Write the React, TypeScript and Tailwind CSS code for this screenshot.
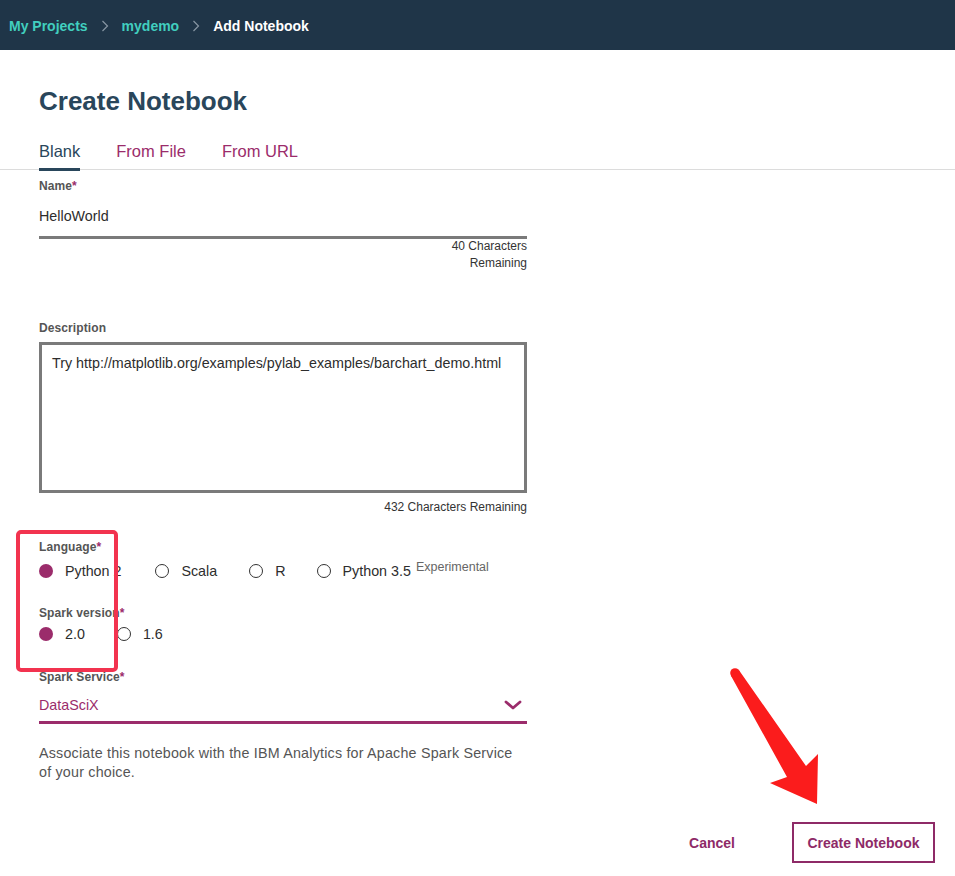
import React from "react";

const FONT = { fontFamily: '"Liberation Sans", Arial, Helvetica, sans-serif' };

function Crumb() {
  return (
    <svg width="8" height="12" viewBox="0 0 8 12" className="mx-[13px]">
      <path d="M1.5 1 L6.5 6 L1.5 11" fill="none" stroke="#8796a3" strokeWidth="1.2" />
    </svg>
  );
}

function Radio({ checked, label, extra }: { checked?: boolean; label: string; extra?: React.ReactNode }) {
  return (
    <div className="flex items-center">
      {checked ? (
        <span className="block w-[14px] h-[14px] rounded-full bg-[#9b2c6b]" />
      ) : (
        <span className="block w-[14px] h-[14px] rounded-full border-[1.5px] border-[#333]" />
      )}
      <span className="ml-[12px] text-[14.3px] leading-[20px] text-[#2d2d2d]">{label}</span>
      {extra}
    </div>
  );
}

function Label({ text, req }: { text: string; req?: boolean }) {
  return (
    <div className="text-[12px] leading-[16px] font-bold text-[#555] tracking-[0.1px]">
      {text}
      {req && <span className="text-[#9b2c6b]">*</span>}
    </div>
  );
}

export default function App() {
  return (
    <div className="relative w-[955px] min-h-[876px] bg-white" style={FONT}>
      {/* header */}
      <div className="h-[50px] bg-[#1f3548] flex items-center pl-[9px] pt-[2px] text-[14px] font-bold">
        <span className="text-[#41cfbf]">My Projects</span>
        <Crumb />
        <span className="text-[#41cfbf]">mydemo</span>
        <Crumb />
        <span className="text-white">Add Notebook</span>
      </div>

      <div className="px-[39px] mt-[36px] text-[26px] leading-[30px] font-bold text-[#29465b]">Create Notebook</div>

      {/* tabs */}
      <div className="mt-[25px] px-[39px] flex gap-[36px] border-b border-[#dcdcdc] h-[29px]">
        <div className="text-[16.5px] leading-[20px] text-[#29465b] pb-[6px] border-b-[3px] border-[#29465b] h-[30px]">Blank</div>
        <div className="text-[16.5px] leading-[20px] text-[#9b2c6b]">From File</div>
        <div className="text-[16.5px] leading-[20px] text-[#9b2c6b]">From URL</div>
      </div>

      <div className="px-[39px]">
        <div className="w-[488px]">
          <div className="mt-[8px]">
            <Label text="Name" req />
          </div>
          <div className="mt-[12px] pb-[10px] border-b-[3px] border-[#7a7a7a] text-[14.3px] leading-[20px] text-[#2d2d2d]">
            HelloWorld
          </div>
          <div className="-mt-[1px] text-right text-[12px] leading-[17px] text-[#333]">
            40 Characters
            <br />
            Remaining
          </div>

          <div className="mt-[48px]">
            <Label text="Description" />
          </div>
          <div className="mt-[6px] h-[151px] border-[3px] border-[#7a7a7a] pt-[8px] pl-[10px] text-[14.3px] leading-[20px] text-[#2d2d2d]">
            Try http://matplotlib.org/examples/pylab_examples/barchart_demo.html
          </div>
          <div className="mt-[6px] text-right text-[12px] leading-[16px] text-[#333]">432 Characters Remaining</div>

          <div className="mt-[24px]">
            <Label text="Language" req />
          </div>
          <div className="mt-[6px] flex items-center">
            <Radio checked label="Python 2" />
            <div className="ml-[34px]">
              <Radio label="Scala" />
            </div>
            <div className="ml-[32px]">
              <Radio label="R" />
            </div>
            <div className="ml-[31px]">
              <Radio
                label="Python 3.5"
                extra={<span className="ml-[5px] -mt-[8px] text-[12.5px] leading-[16px] text-[#666]">Experimental</span>}
              />
            </div>
          </div>

          <div className="mt-[24px]">
            <Label text="Spark version" req />
          </div>
          <div className="mt-[3px] flex items-center">
            <Radio checked label="2.0" />
            <div className="ml-[32px]">
              <Radio label="1.6" />
            </div>
          </div>

          <div className="mt-[25px]">
            <Label text="Spark Service" req />
          </div>
          <div className="mt-[10px] pb-[6px] border-b-[3px] border-[#9b2c6b] flex items-center justify-between">
            <span className="text-[14.3px] leading-[20px] text-[#9b2c6b]">DataSciX</span>
            <svg width="18" height="10" viewBox="0 0 18 10" className="mr-[5px]">
              <path d="M2 2 L9 8 L16 2" fill="none" stroke="#9b2c6b" strokeWidth="2.8" strokeLinecap="round" strokeLinejoin="round" />
            </svg>
          </div>
          <p className="mt-[20px] text-[14.3px] leading-[19px] text-[#555] tracking-[0.2px]">
            Associate this notebook with the IBM Analytics for Apache Spark Service
            <br />
            of your choice.
          </p>
        </div>
      </div>

      {/* footer buttons */}
      <div className="mt-[40px] flex items-center justify-end pr-[20px]">
        <button className="text-[14px] font-bold text-[#8e2a67] mr-[57px] pt-[2px]">Cancel</button>
        <button className="h-[41px] w-[143px] border-2 border-[#8e2a67] text-[14px] font-bold text-[#8e2a67] pt-[1px]">
          Create Notebook
        </button>
      </div>

      {/* annotation: red box */}
      <div className="absolute left-[16px] top-[530px] w-[102px] h-[142px] border-[4px] border-[#f2334f] rounded-[5px]" />

      {/* annotation: arrow */}
      <svg className="absolute left-0 top-0 pointer-events-none" width="955" height="876" viewBox="0 0 955 876">
        <circle cx="735" cy="673" r="4.8" fill="#fb1c1c" />
        <polygon
          points="730.8,675.5 739.2,670.5 806,766 818,754 817,804 770,783 787,777"
          fill="#fb1c1c"
        />
      </svg>
    </div>
  );
}
